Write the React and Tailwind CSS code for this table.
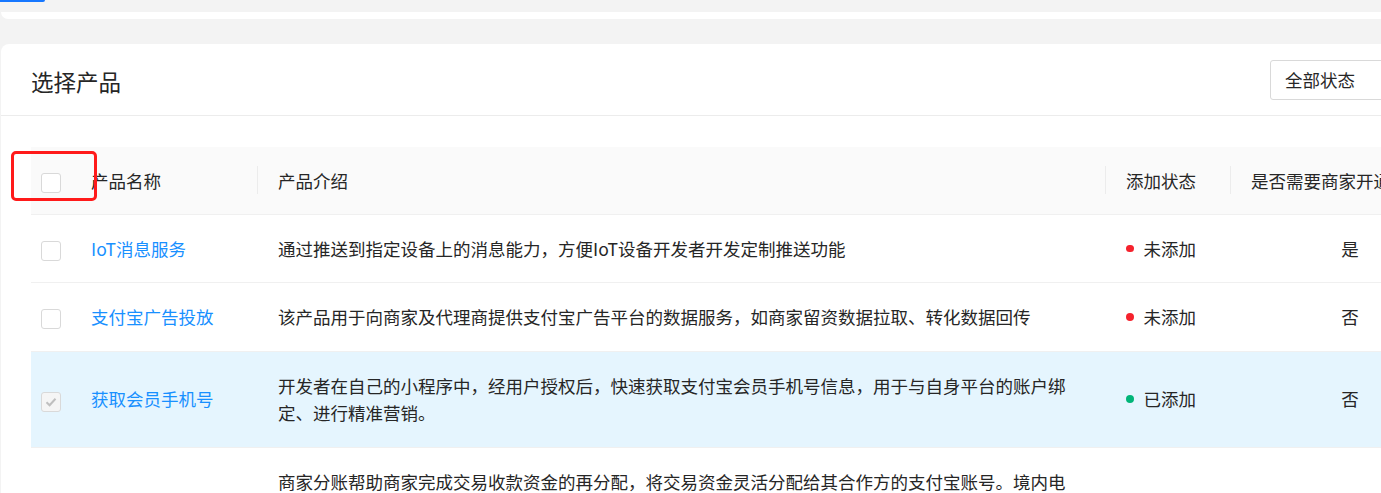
import React from "react";

const rows = [
  {
    name: "IoT消息服务",
    desc: "通过推送到指定设备上的消息能力，方便IoT设备开发者开发定制推送功能",
    added: false,
    need: "是",
  },
  {
    name: "支付宝广告投放",
    desc: "该产品用于向商家及代理商提供支付宝广告平台的数据服务，如商家留资数据拉取、转化数据回传",
    added: false,
    need: "否",
  },
  {
    name: "获取会员手机号",
    desc: "开发者在自己的小程序中，经用户授权后，快速获取支付宝会员手机号信息，用于与自身平台的账户绑定、进行精准营销。",
    added: true,
    need: "否",
    selected: true,
  },
  {
    name: "分账",
    desc: "商家分账帮助商家完成交易收款资金的再分配，将交易资金灵活分配给其合作方的支付宝账号。境内电商、O2O、教育、零售、出行、本地生活等行业商户均可使用该产品实现分账，满足多方合作经营场景下的资金结算需求，支持实时分账与延时分账两种模式，商户可根据自身业务需要灵活配置分账比例、分账对象与分账周期，分账资金实时到账，账务清晰透明，帮助商户降低资金管理成本，提升合作伙伴之间的结算效率与资金安全。",
    added: false,
    need: "是",
  },
];

function Checkbox({ checked, disabled }) {
  return (
    <span
      className={
        "inline-flex h-[20px] w-[20px] items-center justify-center rounded-[3px] border border-[#d9d9d9] align-middle " +
        (disabled ? "bg-[#f5f5f5]" : "bg-white")
      }
    >
      {checked && (
        <svg width="12" height="10" viewBox="0 0 12 10" fill="none">
          <path d="M1.5 5.2L4.6 8.2L10.5 1.8" stroke="#bfbfbf" strokeWidth="2" />
        </svg>
      )}
    </span>
  );
}

function Sep() {
  return <span className="absolute right-0 top-1/2 h-[28px] w-px -translate-y-1/2 bg-[#ececec]" />;
}

export default function App() {
  return (
    <div
      className="relative h-[493px] w-[1381px] overflow-hidden bg-[#f3f3f3] text-[17.5px] leading-[27.5px] text-[#262626]"
      style={{ fontFamily: '"Noto Sans CJK SC", "Noto Sans", sans-serif' }}
    >
      <div className="h-[12px]">
        <div className="h-[2px] w-[45px] rounded-br-[2px] bg-[#1677ff]" />
      </div>
      <div className="ml-[1px] h-[7px] w-[1500px] rounded-b-[8px] bg-white" />
      <div className="h-[25px]" />
      <div className="ml-[1px] w-[1500px] rounded-t-[8px] bg-white">
        <div className="flex h-[72px] items-center border-b border-[#ececec] px-[30px]">
          <div className="pt-[2px] text-[22.5px] leading-[32px] text-[#262626]">选择产品</div>
          <div className="ml-auto flex h-[40px] w-[201px] items-center justify-between rounded-[3px] border border-[#d9d9d9] pl-[14px] pr-[14px]">
            <span>全部状态</span>
            <svg width="14" height="14" viewBox="0 0 14 14" fill="none">
              <path d="M2 5L7 10L12 5" stroke="#bfbfbf" strokeWidth="1.5" />
            </svg>
          </div>
        </div>
        <div className="pl-[30px] pt-[31px]">
          <table className="w-[1438px] table-fixed border-collapse">
            <colgroup>
              <col className="w-[40px]" />
              <col className="w-[187px]" />
              <col className="w-[848px]" />
              <col className="w-[125px]" />
              <col className="w-[238px]" />
            </colgroup>
            <thead>
              <tr className="bg-[#fafafa]">
                <th className="h-[67px] border-b border-[#f0f0f0] pl-[10px] text-left align-middle">
                  <Checkbox />
                </th>
                <th className="relative border-b border-[#f0f0f0] px-[20px] text-left font-normal">
                  产品名称
                  <Sep />
                </th>
                <th className="relative border-b border-[#f0f0f0] px-[20px] text-left font-normal">
                  产品介绍
                  <Sep />
                </th>
                <th className="relative border-b border-[#f0f0f0] px-[20px] text-left font-normal">
                  添加状态
                  <Sep />
                </th>
                <th className="whitespace-nowrap border-b border-[#f0f0f0] px-[20px] text-left font-normal">
                  是否需要商家开通
                </th>
              </tr>
            </thead>
            <tbody>
              {rows.map((r) => (
                <tr key={r.name} className={r.selected ? "bg-[#e5f5fe]" : "bg-white"}>
                  <td className="border-b border-[#f0f0f0] pl-[10px] align-middle">
                    <Checkbox checked={r.added} disabled={r.added} />
                  </td>
                  <td className="border-b border-[#f0f0f0] px-[20px] align-middle text-[#1890ff]">{r.name}</td>
                  <td className="border-b border-[#f0f0f0] px-[20px] py-[20px] align-middle">{r.desc}</td>
                  <td className="border-b border-[#f0f0f0] px-[20px] align-middle">
                    <span className="flex items-center gap-[10px]">
                      <span
                        className={
                          "h-[7.5px] w-[7.5px] rounded-full " + (r.added ? "bg-[#00b578]" : "bg-[#f5222d]")
                        }
                      />
                      {r.added ? "已添加" : "未添加"}
                    </span>
                  </td>
                  <td className="border-b border-[#f0f0f0] px-[20px] text-center align-middle">{r.need}</td>
                </tr>
              ))}
            </tbody>
          </table>
        </div>
      </div>
      <div className="pointer-events-none absolute left-[11px] top-[151px] h-[50px] w-[86px] rounded-[5px] border-[3px] border-[#ff1a1a]" />
    </div>
  );
}
